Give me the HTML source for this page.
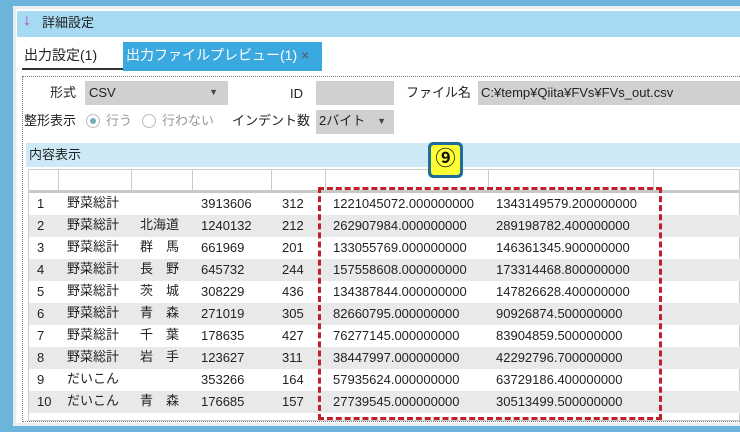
<!DOCTYPE html>
<html><head><meta charset="utf-8"><style>
*{margin:0;padding:0;box-sizing:border-box}
body{width:740px;height:432px;overflow:hidden;background:#6cb4dc;font-family:"Liberation Sans","Noto Sans CJK JP",sans-serif;font-size:13px;color:#222;position:relative}
.win{position:absolute;left:13px;top:6px;width:740px;height:420px;background:#fff;border:3px solid #e6eef2}
.a{position:absolute}
.j{transform:translateY(-4px)}
.title{left:17px;top:11px;width:723px;height:26px;background:#a6d9f2}
.g{background:#d0d0d0}
.row{position:absolute;left:29px;width:624px;height:22px}
.c{position:absolute;top:3px;white-space:nowrap}
</style></head><body>
<div class="win"></div>
<div class="a title"></div>
<div class="a" style="left:23px;top:12px;color:#c03cc0;font-size:16px;font-weight:bold">↓</div>
<div class="a j" style="left:42px;top:16px">詳細設定</div>
<div class="a j" style="left:24px;top:49px;font-size:14px">出力設定(1)</div>
<div class="a" style="left:22px;top:68px;width:101px;height:2px;background:#333"></div>
<div class="a" style="left:123px;top:42px;width:199px;height:29px;background:#3aa9e0;color:#fff;font-size:14px;padding:3px 0 0 3px">出力ファイルプレビュー(1) <span style="color:#555">×</span></div>
<div class="a" style="left:22px;top:76px;width:720px;height:346px;border:1px dotted #777"></div>
<div class="a j" style="left:50px;top:86px">形式</div>
<div class="a g" style="left:85px;top:81px;width:143px;height:24px;padding:4px 4px">CSV<span style="position:absolute;right:10px;top:6px;font-size:9px;color:#444">▼</span></div>
<div class="a" style="left:290px;top:86px">ID</div>
<div class="a g" style="left:316px;top:81px;width:78px;height:24px"></div>
<div class="a j" style="left:406px;top:86px">ファイル名</div>
<div class="a g" style="left:478px;top:81px;width:262px;height:24px;padding:4px 3px">C:¥temp¥Qiita¥FVs¥FVs_out.csv</div>
<div class="a j" style="left:24px;top:114px">整形表示</div>
<div class="a" style="left:86px;top:114px;width:14px;height:14px;border:1px solid #bbb;border-radius:50%"><div style="margin:3px;width:6px;height:6px;border-radius:50%;background:#7ab"></div></div>
<div class="a j" style="left:106px;top:114px;color:#999">行う</div>
<div class="a" style="left:142px;top:114px;width:14px;height:14px;border:1px solid #bbb;border-radius:50%"></div>
<div class="a j" style="left:162px;top:114px;color:#999">行わない</div>
<div class="a j" style="left:232px;top:114px">インデント数</div>
<div class="a g" style="left:316px;top:110px;width:78px;height:24px"><span class="a j" style="left:3px;top:4px">2バイト</span><span style="position:absolute;right:8px;top:6px;font-size:9px;color:#444">▼</span></div>
<div class="a" style="left:26px;top:143px;width:714px;height:24px;background:#cde9f6"><span class="a j" style="left:3px;top:5px">内容表示</span></div>
<div class="a" style="left:28px;top:169px;width:712px;height:252px;border:1px solid #ccc;background:#fff"></div>
<div class="a" style="left:29px;top:190px;width:711px;height:3px;background:#c8c8c8"></div>
<div class="a" style="left:58px;top:170px;width:1px;height:20px;background:#ccc"></div>
<div class="a" style="left:131px;top:170px;width:1px;height:20px;background:#ccc"></div>
<div class="a" style="left:192px;top:170px;width:1px;height:20px;background:#ccc"></div>
<div class="a" style="left:271px;top:170px;width:1px;height:20px;background:#ccc"></div>
<div class="a" style="left:325px;top:170px;width:1px;height:20px;background:#ccc"></div>
<div class="a" style="left:488px;top:170px;width:1px;height:20px;background:#ccc"></div>
<div class="a" style="left:653px;top:170px;width:1px;height:20px;background:#ccc"></div>
<div class="row" style="top:193px"><span class="c" style="left:8px">1</span><span class="c j" style="left:38px">野菜総計</span><span class="c" style="left:172px">3913606</span><span class="c" style="left:253px">312</span><span class="c" style="left:304px">1221045072.000000000</span><span class="c" style="left:467px">1343149579.200000000</span></div>
<div class="row" style="top:215px;background:#e9e9e9;width:711px"><span class="c" style="left:8px">2</span><span class="c j" style="left:38px">野菜総計</span><span class="c j" style="left:111px">北海道</span><span class="c" style="left:172px">1240132</span><span class="c" style="left:253px">212</span><span class="c" style="left:304px">262907984.000000000</span><span class="c" style="left:467px">289198782.400000000</span></div>
<div class="row" style="top:237px"><span class="c" style="left:8px">3</span><span class="c j" style="left:38px">野菜総計</span><span class="c j" style="left:111px">群　馬</span><span class="c" style="left:172px">661969</span><span class="c" style="left:253px">201</span><span class="c" style="left:304px">133055769.000000000</span><span class="c" style="left:467px">146361345.900000000</span></div>
<div class="row" style="top:259px;background:#e9e9e9;width:711px"><span class="c" style="left:8px">4</span><span class="c j" style="left:38px">野菜総計</span><span class="c j" style="left:111px">長　野</span><span class="c" style="left:172px">645732</span><span class="c" style="left:253px">244</span><span class="c" style="left:304px">157558608.000000000</span><span class="c" style="left:467px">173314468.800000000</span></div>
<div class="row" style="top:281px"><span class="c" style="left:8px">5</span><span class="c j" style="left:38px">野菜総計</span><span class="c j" style="left:111px">茨　城</span><span class="c" style="left:172px">308229</span><span class="c" style="left:253px">436</span><span class="c" style="left:304px">134387844.000000000</span><span class="c" style="left:467px">147826628.400000000</span></div>
<div class="row" style="top:303px;background:#e9e9e9;width:711px"><span class="c" style="left:8px">6</span><span class="c j" style="left:38px">野菜総計</span><span class="c j" style="left:111px">青　森</span><span class="c" style="left:172px">271019</span><span class="c" style="left:253px">305</span><span class="c" style="left:304px">82660795.000000000</span><span class="c" style="left:467px">90926874.500000000</span></div>
<div class="row" style="top:325px"><span class="c" style="left:8px">7</span><span class="c j" style="left:38px">野菜総計</span><span class="c j" style="left:111px">千　葉</span><span class="c" style="left:172px">178635</span><span class="c" style="left:253px">427</span><span class="c" style="left:304px">76277145.000000000</span><span class="c" style="left:467px">83904859.500000000</span></div>
<div class="row" style="top:347px;background:#e9e9e9;width:711px"><span class="c" style="left:8px">8</span><span class="c j" style="left:38px">野菜総計</span><span class="c j" style="left:111px">岩　手</span><span class="c" style="left:172px">123627</span><span class="c" style="left:253px">311</span><span class="c" style="left:304px">38447997.000000000</span><span class="c" style="left:467px">42292796.700000000</span></div>
<div class="row" style="top:369px"><span class="c" style="left:8px">9</span><span class="c j" style="left:38px">だいこん</span><span class="c" style="left:172px">353266</span><span class="c" style="left:253px">164</span><span class="c" style="left:304px">57935624.000000000</span><span class="c" style="left:467px">63729186.400000000</span></div>
<div class="row" style="top:391px;background:#e9e9e9;width:711px"><span class="c" style="left:8px">10</span><span class="c j" style="left:38px">だいこん</span><span class="c j" style="left:111px">青　森</span><span class="c" style="left:172px">176685</span><span class="c" style="left:253px">157</span><span class="c" style="left:304px">27739545.000000000</span><span class="c" style="left:467px">30513499.500000000</span></div>
<div class="a" style="left:318px;top:187px;width:344px;height:233px;border:3px dashed #c0202a"></div>
<div class="a" style="left:428px;top:142px;width:35px;height:36px;background:#1e6e98;border-radius:5px;padding:3px"><div style="width:29px;height:30px;background:#ffff33;border-radius:3px;text-align:center;font-size:20px;line-height:28px;font-weight:bold;color:#111">⑨</div></div>
</body></html>
